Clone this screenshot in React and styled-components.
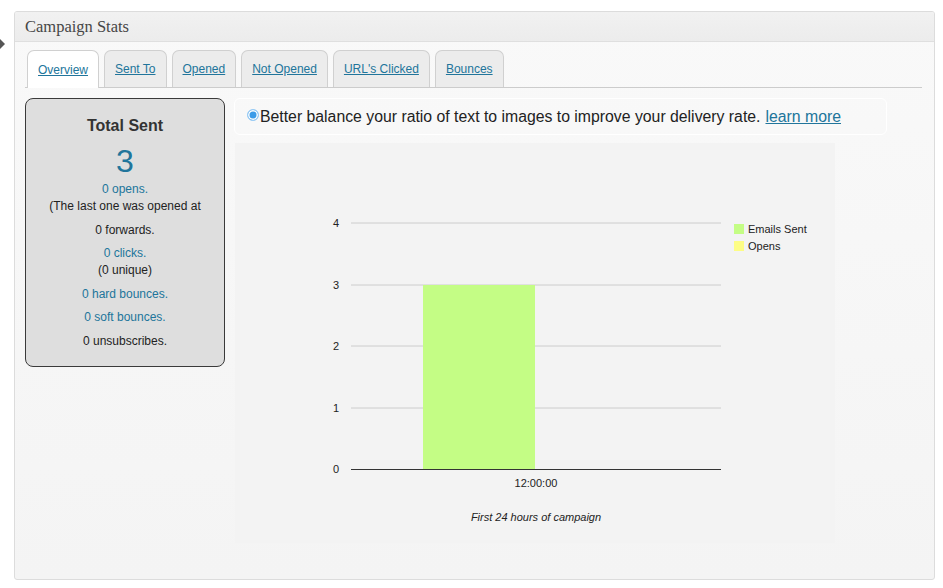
import React from "react";
import styled, { createGlobalStyle } from "styled-components";

const GlobalStyle = createGlobalStyle`
  body {
    margin: 0;
    background: #ffffff;
    font-family: "Liberation Sans", Arial, sans-serif;
  }
`;

const Page = styled.div`
  position: relative;
  padding: 11px 0 0 14px;
`;

const Arrow = styled.div`
  position: absolute;
  left: 0;
  top: 36px;
  width: 6px;
  height: 12px;
`;

const Panel = styled.div`
  width: 919px;
  height: 567px;
  border: 1px solid #dcdcdc;
  border-radius: 3px;
  background: linear-gradient(to bottom, #f9f9f9, #f4f4f4);
  overflow: hidden;
`;

const Header = styled.div`
  height: 29px;
  border-bottom: 1px solid #dfdfdf;
  background: linear-gradient(to bottom, #f1f1f1, #ececec);
  font-family: "Liberation Serif", Georgia, serif;
  font-size: 16.5px;
  color: #464646;
  line-height: 30px;
  padding-left: 10px;
`;

const Body = styled.div`
  padding: 8px 11px 0 10px;
`;

const TabBar = styled.div`
  display: flex;
  gap: 5px;
  padding-left: 2px;
  border-bottom: 1px solid #cccccc;
  margin-right: 1px;
`;

const Tab = styled.a`
  padding: 0 10px;
  display: flex;
  align-items: center;
  border: 1px solid #d0d0d0;
  border-bottom: none;
  border-radius: 7px 7px 0 0;
  background: ${(p) => (p.$active ? "#ffffff" : "#ececec")};
  margin-bottom: ${(p) => (p.$active ? "-1px" : "0")};
  height: ${(p) => (p.$active ? "37px" : "36px")};
  font-size: 12px;
  color: #21759b;
  text-decoration: underline;
`;

const Content = styled.div`
  display: flex;
  gap: 10px;
  margin-top: 10px;
`;

const StatsBox = styled.div`
  width: 198px;
  height: 267px;
  border: 1px solid #3a3a3a;
  border-radius: 8px;
  background: #dedede;
  box-sizing: content-box;
  text-align: center;
  font-size: 12px;
  color: #222;
`;

const BoxTitle = styled.div`
  font-size: 16px;
  font-weight: bold;
  color: #333;
  margin-top: 18px;
`;

const Big = styled.div`
  font-size: 32px;
  color: #21759b;
  line-height: 40px;
  margin-top: 6px;
`;

const Stat = styled.p`
  margin: 0 0 6.6px;
  line-height: 17px;
`;

const Line = styled.span`
  display: block;
  color: ${(p) => (p.$link ? "#21759b" : "#222")};
`;

const Right = styled.div`
  display: flex;
  flex-direction: column;
  gap: 8px;
`;

const Notice = styled.div`
  width: 639px;
  height: 35px;
  border: 1px solid #ffffff;
  border-radius: 6px;
  display: flex;
  align-items: center;
  padding-left: 12px;
  box-sizing: content-box;
  margin-left: -1px;
  font-size: 15.8px;
  color: #222;
`;

const Dot = styled.span`
  width: 10px;
  height: 10px;
  border-radius: 50%;
  background: #3b9be8;
  border: 1px solid #9ccdf5;
  box-shadow: inset 0 0 0 1.5px #ffffff;
  margin-right: 1px;
  flex: none;
  margin-top: -3px;
`;

const LearnMore = styled.a`
  color: #21759b;
  text-decoration: underline;
  margin-left: 5px;
`;

const ChartArea = styled.div`
  width: 600px;
  height: 400px;
  background: #f3f3f3;
`;

const ChartText = styled.text`
  font-family: "Liberation Sans", Arial, sans-serif;
  font-size: 11px;
  fill: #222;
`;

const tabs = ["Overview", "Sent To", "Opened", "Not Opened", "URL's Clicked", "Bounces"];

const ticks = [
  { v: 4, y: 80 },
  { v: 3, y: 142 },
  { v: 2, y: 203 },
  { v: 1, y: 265 },
];

const Chart = () => (
  <ChartArea>
    <svg width="600" height="400">
      {ticks.map((t) => (
        <g key={t.v}>
          <line x1="116" x2="486" y1={t.y} y2={t.y} stroke="#cccccc" strokeWidth="1" />
          <ChartText x="104" y={t.y + 4} textAnchor="end">{t.v}</ChartText>
        </g>
      ))}
      <rect x="188" y="142" width="112" height="184" fill="#c4fd85" />
      <line x1="116" x2="486" y1="326.5" y2="326.5" stroke="#333333" strokeWidth="1" />
      <ChartText x="104" y="330" textAnchor="end">0</ChartText>
      <ChartText x="301" y="344" textAnchor="middle">12:00:00</ChartText>
      <ChartText x="301" y="378" textAnchor="middle" fontStyle="italic">
        First 24 hours of campaign
      </ChartText>
      <rect x="499" y="81" width="10" height="10" fill="#c4fd85" />
      <ChartText x="513" y="90">Emails Sent</ChartText>
      <rect x="499" y="98" width="10" height="10" fill="#fdfd85" />
      <ChartText x="513" y="107">Opens</ChartText>
    </svg>
  </ChartArea>
);

const App = () => (
  <Page>
    <GlobalStyle />
    <Arrow>
      <svg width="6" height="12" viewBox="0 0 6 12">
        <path d="M0 1 L5 6 L0 11 Z" fill="#555" />
      </svg>
    </Arrow>
    <Panel>
      <Header>Campaign Stats</Header>
      <Body>
        <TabBar>
          {tabs.map((t, i) => (
            <Tab key={t} $active={i === 0}>{t}</Tab>
          ))}
        </TabBar>
        <Content>
          <StatsBox>
            <BoxTitle>Total Sent</BoxTitle>
            <Big>3</Big>
            <Stat>
              <Line $link>0 opens.</Line>
              <Line>(The last one was opened at</Line>
            </Stat>
            <Stat>
              <Line>0 forwards.</Line>
            </Stat>
            <Stat>
              <Line $link>0 clicks.</Line>
              <Line>(0 unique)</Line>
            </Stat>
            <Stat>
              <Line $link>0 hard bounces.</Line>
            </Stat>
            <Stat>
              <Line $link>0 soft bounces.</Line>
            </Stat>
            <Stat>
              <Line>0 unsubscribes.</Line>
            </Stat>
          </StatsBox>
          <Right>
            <Notice>
              <Dot />
              Better balance your ratio of text to images to improve your delivery rate.
              <LearnMore>learn more</LearnMore>
            </Notice>
            <Chart />
          </Right>
        </Content>
      </Body>
    </Panel>
  </Page>
);

export default App;
